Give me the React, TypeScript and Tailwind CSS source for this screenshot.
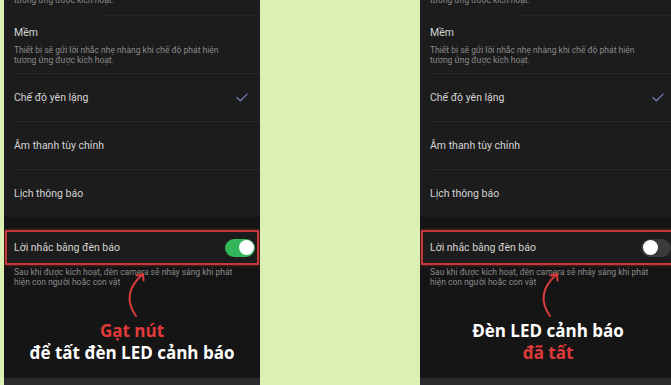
import React from "react";

const Check = () => (
  <svg width="12" height="9" viewBox="0 0 12 9">
    <path d="M1 4.6L4.3 7.8L11 1.2" stroke="#6a7aae" strokeWidth="1.4" fill="none" strokeLinecap="round" strokeLinejoin="round" />
  </svg>
);

const Arrow = ({ x }: { x: number }) => (
  <svg className="absolute top-0 h-[385px] w-[255px] pointer-events-none" style={{ left: 0 }} viewBox="0 0 255 385">
    <g transform={`translate(${x},0)`} stroke="#d83c3c" strokeWidth="2" fill="none" strokeLinecap="round" strokeLinejoin="round">
      <path d="M128 316 C 118 302, 119 288, 135 274" />
      <path d="M128.5 275.5 L135 274 L135.5 280.5" />
    </g>
  </svg>
);

function Row({ label, check }: { label: string; check?: boolean }) {
  return (
    <div className="h-[47px] flex items-center justify-between pl-[10px] pr-[12px]">
      <span className="text-[10.5px] text-[#d4d4d4]">{label}</span>
      {check && <Check />}
    </div>
  );
}

const Sep = () => <div className="ml-[13px] h-px bg-[#282828]" />;

function Panel({ on, children, arrowX }: { on: boolean; children: React.ReactNode; arrowX: number }) {
  return (
    <div className="relative w-[256px] shrink-0 h-[385px] overflow-hidden bg-[#1c1c1c] flex flex-col font-['Roboto',sans-serif]">
      <div className="-mt-[5px] h-[20px] pl-[10px] text-[8.5px] leading-[10px] text-[#8a8a8a]">tương ứng được kích hoạt.</div>
      <div className="ml-[100px] h-px bg-[#262626]" />
      <div className="h-[57px] pl-[10px] pt-[10px]">
        <div className="text-[10.5px] leading-[14px] text-[#d4d4d4]">Mềm</div>
        <div className="mt-[5px] text-[8.5px] leading-[10px] text-[#8a8a8a]">
          Thiết bị sẽ gửi lời nhắc nhẹ nhàng khi chế độ phát hiện
          <br />
          tương ứng được kích hoạt.
        </div>
      </div>
      <Sep />
      <Row label="Chế độ yên lặng" check />
      <Sep />
      <Row label="Âm thanh tùy chỉnh" />
      <Sep />
      <Row label="Lịch thông báo" />
      <div className="flex-1 flex flex-col bg-[#151515]">
        <div className="mt-[13px] mx-[1px] h-[35px] border-2 border-[#c8383b] shadow-[0_0_3px_rgba(200,56,59,0.6)] bg-[#1c1c1c] flex items-center justify-between pl-[7px] pr-[2px]">
          <span className="text-[10.5px] text-[#d4d4d4]">Lời nhắc bằng đèn báo</span>
          {on ? (
            <div className="w-[30px] h-[18px] rounded-full bg-[#33b75a] flex items-center justify-end pr-[1.5px]">
              <div className="w-[15px] h-[15px] rounded-full bg-white" />
            </div>
          ) : (
            <div className="w-[30px] h-[18px] rounded-full bg-[#3a3a3c] flex items-center pl-[1.5px]">
              <div className="w-[15px] h-[15px] rounded-full bg-white" />
            </div>
          )}
        </div>
        <div className="pl-[10px] pt-[2px] text-[8.5px] leading-[10px] text-[#8a8a8a]">
          Sau khi được kích hoạt, đèn camera sẽ nháy sáng khi phát
          <br />
          hiện con người hoặc con vật
        </div>
        <div className="mt-[33px] flex flex-col items-center font-['Open_Sans',sans-serif] font-bold text-[17px] leading-[22px]">
          {children}
        </div>
        <div className="mt-auto h-[7px] bg-[#2b2b2d]" />
      </div>
      <Arrow x={arrowX} />
    </div>
  );
}

export default function App() {
  return (
    <div className="w-[671px] h-[385px] flex bg-[#dbf0b2] overflow-hidden">
      <div className="w-[4px] shrink-0" />
      <Panel on arrowX={4}>
        <span className="text-[#e03a3b] text-[17px]">Gạt nút</span>
        <span className="text-white">để tất đèn LED cảnh báo</span>
      </Panel>
      <div className="w-[160px] shrink-0" />
      <Panel on={false} arrowX={2}>
        <span className="text-white">Đèn LED cảnh báo</span>
        <span className="text-[#e03a3b]">đã tất</span>
      </Panel>
    </div>
  );
}
